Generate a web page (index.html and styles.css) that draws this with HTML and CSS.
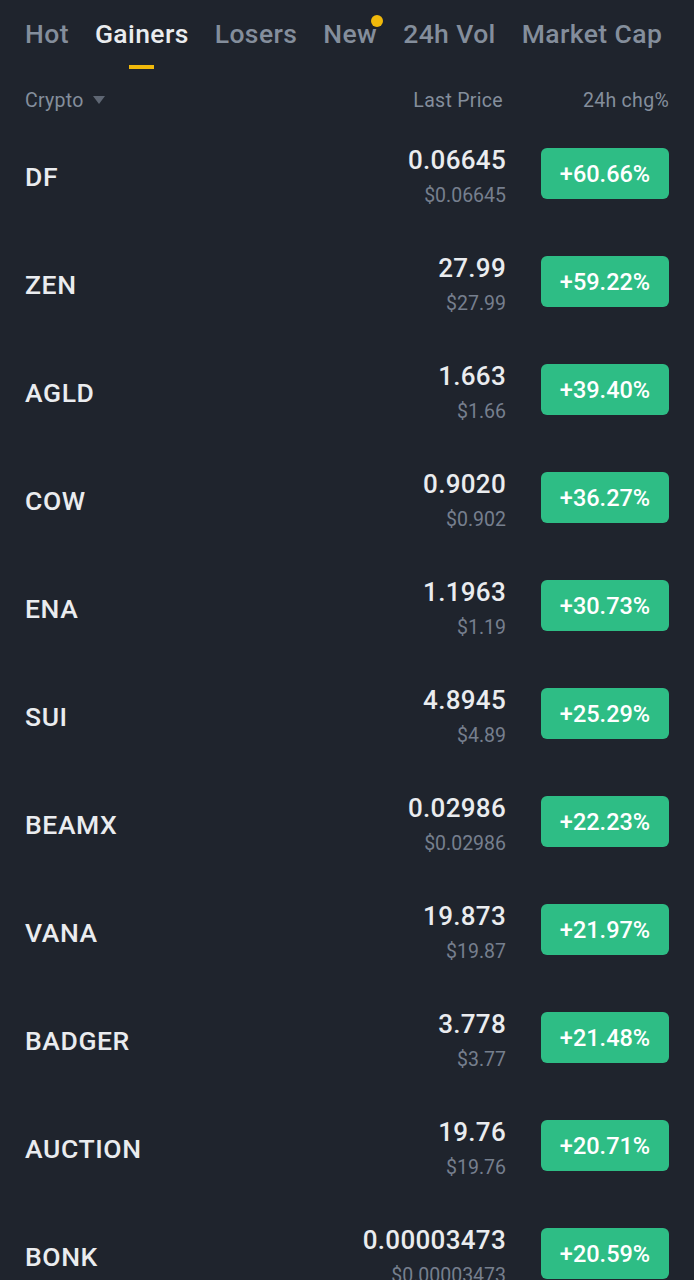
FILE: index.html
```html
<!DOCTYPE html>
<html>
<head>
<meta charset="utf-8">
<link rel="stylesheet" href="styles.css">
</head>
<body>
<div class="page">
  <nav class="tabs">
    <span class="tab">Hot</span>
    <span class="tab active">Gainers</span>
    <span class="tab">Losers</span>
    <span class="tab dot">New</span>
    <span class="tab">24h Vol</span>
    <span class="tab">Market Cap</span>
  </nav>
  <div class="head">
    <span class="h-crypto">Crypto <svg class="tri" width="12" height="9" viewBox="0 0 12 9"><path d="M0 0H12L6 8Z" fill="#5e6673"/></svg></span>
    <span class="h-price">Last Price</span>
    <span class="h-chg">24h chg%</span>
  </div>
  <div class="list">
    <div class="row"><span class="sym">DF</span><div class="price"><span class="p">0.06645</span><span class="u">$0.06645</span></div><span class="chg">+60.66%</span></div>
    <div class="row"><span class="sym">ZEN</span><div class="price"><span class="p">27.99</span><span class="u">$27.99</span></div><span class="chg">+59.22%</span></div>
    <div class="row"><span class="sym">AGLD</span><div class="price"><span class="p">1.663</span><span class="u">$1.66</span></div><span class="chg">+39.40%</span></div>
    <div class="row"><span class="sym">COW</span><div class="price"><span class="p">0.9020</span><span class="u">$0.902</span></div><span class="chg">+36.27%</span></div>
    <div class="row"><span class="sym">ENA</span><div class="price"><span class="p">1.1963</span><span class="u">$1.19</span></div><span class="chg">+30.73%</span></div>
    <div class="row"><span class="sym">SUI</span><div class="price"><span class="p">4.8945</span><span class="u">$4.89</span></div><span class="chg">+25.29%</span></div>
    <div class="row"><span class="sym">BEAMX</span><div class="price"><span class="p">0.02986</span><span class="u">$0.02986</span></div><span class="chg">+22.23%</span></div>
    <div class="row"><span class="sym">VANA</span><div class="price"><span class="p">19.873</span><span class="u">$19.87</span></div><span class="chg">+21.97%</span></div>
    <div class="row"><span class="sym">BADGER</span><div class="price"><span class="p">3.778</span><span class="u">$3.77</span></div><span class="chg">+21.48%</span></div>
    <div class="row"><span class="sym">AUCTION</span><div class="price"><span class="p">19.76</span><span class="u">$19.76</span></div><span class="chg">+20.71%</span></div>
    <div class="row"><span class="sym">BONK</span><div class="price"><span class="p">0.00003473</span><span class="u">$0.00003473</span></div><span class="chg">+20.59%</span></div>
  </div>
</div>
</body>
</html>
```
FILE: styles.css
```css
html, body {
  margin: 0;
  padding: 0;
  background: #1f242d;
}
body {
  font-family: Roboto, "Liberation Sans", sans-serif;
  color: #eaecef;
  height: 1280px;
  overflow: hidden;
}
.page {
  padding: 0 25px;
}
.tabs {
  display: flex;
  gap: 26px;
  height: 80px;
  align-items: flex-start;
  padding-top: 17px;
  box-sizing: border-box;
  white-space: nowrap;
}
.tab {
  font-size: 26.5px;
  font-weight: 500;
  letter-spacing: 0.4px;
  color: #848e9c;
  line-height: 34px;
  position: relative;
}
.tab.active {
  color: #eaecef;
}
.tab.active::after {
  content: "";
  position: absolute;
  left: 50%;
  top: 48px;
  width: 25px;
  height: 4px;
  margin-left: -13px;
  background: #f0b90b;
}
.tab.dot::after {
  content: "";
  position: absolute;
  right: -6px;
  top: -2px;
  width: 12px;
  height: 12px;
  border-radius: 50%;
  background: #f0b90b;
}
.head {
  display: flex;
  align-items: center;
  height: 40px;
  font-size: 19.5px;
  letter-spacing: 0.3px;
  color: #848e9c;
}
.h-crypto {
  flex: 1;
  display: flex;
  align-items: center;
  gap: 9px;
}
.h-price {
  margin-right: 80px;
}
.h-chg {
  text-align: right;
}
.list {
  display: flex;
  flex-direction: column;
  padding-top: 2px;
}
.row {
  height: 108px;
  display: flex;
  align-items: center;
}
.sym {
  flex: 1;
  font-size: 26.5px;
  font-weight: 500;
  letter-spacing: 0.6px;
  color: #eaecef;
}
.price {
  display: flex;
  flex-direction: column;
  align-items: flex-end;
  margin-right: 35px;
}
.p {
  font-size: 26px;
  font-weight: 500;
  letter-spacing: 0.3px;
  line-height: 32px;
}
.u {
  font-size: 19.5px;
  color: #767f8e;
  line-height: 26px;
  margin-top: 7px;
}
.chg {
  width: 128px;
  height: 51px;
  border-radius: 6px;
  background: #2ebd85;
  color: #fff;
  font-size: 23.5px;
  font-weight: 500;
  display: flex;
  align-items: center;
  justify-content: center;
  margin-top: -5px;
}
```
